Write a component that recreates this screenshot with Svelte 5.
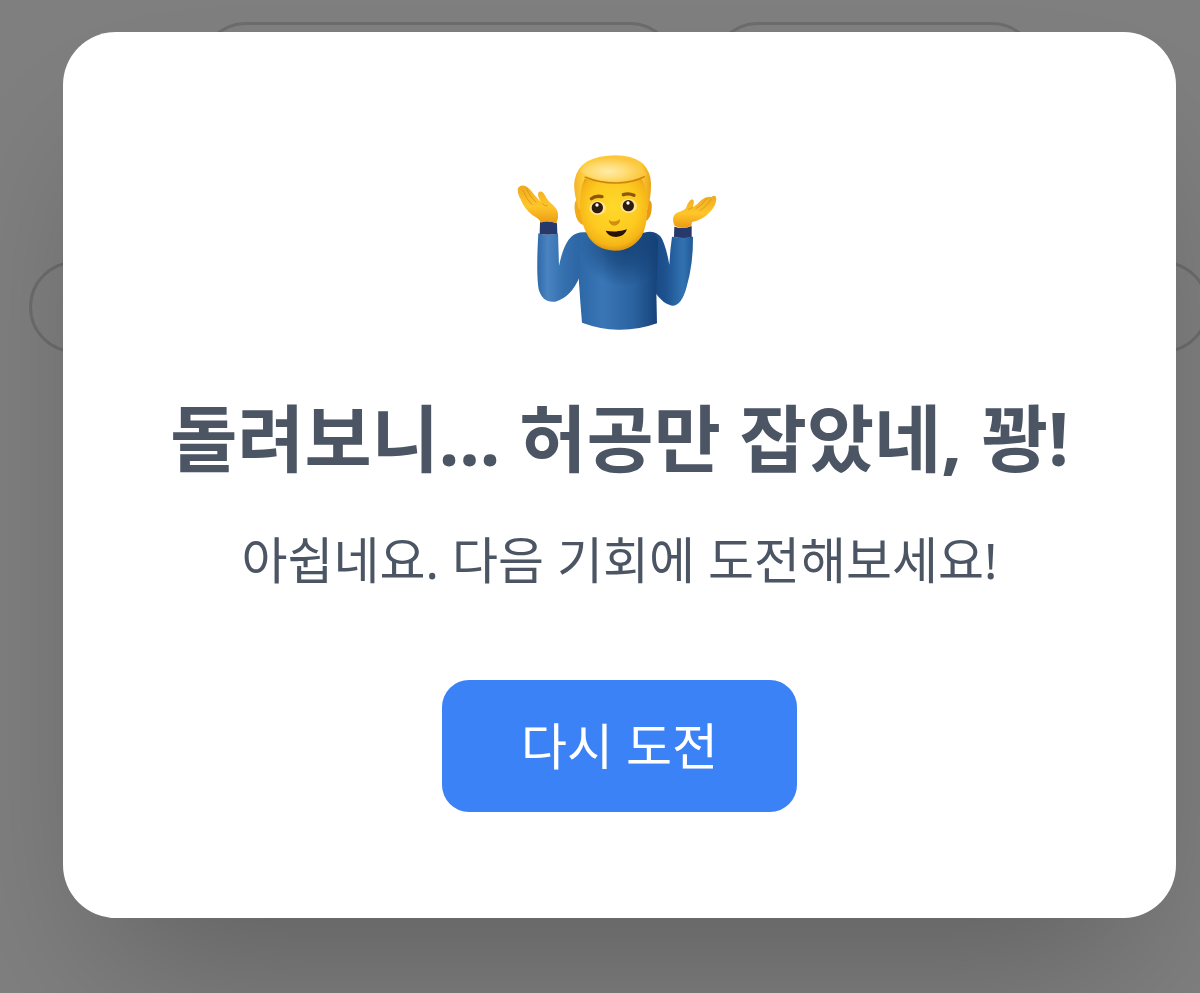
<script>
	let open = true;

	function retry() {
		open = false;
	}
</script>

<div class="page" aria-hidden="true">
	<div class="row">
		<span class="pill wide"></span>
		<span class="pill"></span>
	</div>
	<div class="row full">
		<span class="pill"></span>
		<span class="pill"></span>
	</div>
</div>

{#if open}
	<div class="overlay">
		<div class="dialog" role="dialog" aria-modal="true" aria-labelledby="title">
			<svg class="shrug" viewBox="0 0 720 600" aria-hidden="true">
				<defs>
					<linearGradient id="hair" x1="0" y1="0" x2="1" y2="0">
						<stop offset="0" stop-color="#f3b326" />
						<stop offset="0.12" stop-color="#ffce3c" />
						<stop offset="0.88" stop-color="#fdc832" />
						<stop offset="1" stop-color="#e9a41a" />
					</linearGradient>
					<radialGradient id="face" cx="0.5" cy="0.4" r="0.62">
						<stop offset="0" stop-color="#ffd92a" />
						<stop offset="0.6" stop-color="#fdca20" />
						<stop offset="0.85" stop-color="#f5b518" />
						<stop offset="1" stop-color="#d98c0c" />
					</radialGradient>
					<radialGradient id="fringe" cx="0.42" cy="0.6" r="0.55">
						<stop offset="0" stop-color="#ffecaa" />
						<stop offset="0.5" stop-color="#ffdc74" />
						<stop offset="1" stop-color="#fbc63a" />
					</radialGradient>
					<linearGradient id="hand" x1="0" y1="0" x2="0" y2="1">
						<stop offset="0" stop-color="#eeaa20" />
						<stop offset="0.55" stop-color="#ffc62a" />
						<stop offset="1" stop-color="#e99a14" />
					</linearGradient>
					<linearGradient id="body" x1="0" y1="0" x2="1" y2="0">
						<stop offset="0" stop-color="#2c67a6" />
						<stop offset="0.3" stop-color="#3a76b6" />
						<stop offset="0.7" stop-color="#2a629f" />
						<stop offset="1" stop-color="#154278" />
					</linearGradient>
					<radialGradient id="shade" gradientUnits="userSpaceOnUse" cx="370" cy="310" r="130">
						<stop offset="0" stop-color="#0f3a6c" stop-opacity="0.8" />
						<stop offset="0.5" stop-color="#0f3a6c" stop-opacity="0.5" />
						<stop offset="1" stop-color="#0f3a6c" stop-opacity="0" />
					</radialGradient>
					<linearGradient id="sleeveL" x1="0" y1="0" x2="1" y2="0">
						<stop offset="0" stop-color="#2f69a8" />
						<stop offset="0.2" stop-color="#4a83c0" />
						<stop offset="0.5" stop-color="#3570af" />
						<stop offset="1" stop-color="#28609f" />
					</linearGradient>
					<linearGradient id="sleeveR" x1="0" y1="0" x2="1" y2="0">
						<stop offset="0" stop-color="#154278" />
						<stop offset="0.45" stop-color="#1d5290" />
						<stop offset="0.8" stop-color="#3272b2" />
						<stop offset="1" stop-color="#215993" />
					</linearGradient>
				</defs>
				<path fill="url(#sleeveL)" d="M115 280Q144 290 174 280L177 378Q190 312 214 290Q232 272 266 278L240 408Q214 472 166 485Q128 490 116 448Q108 400 115 280Z" />
				<path fill="url(#sleeveR)" d="M430 280Q466 266 486 296Q500 326 508 374Q510 330 516 290Q548 296 579 290Q580 370 560 440Q545 498 516 497Q490 493 464 456Z" />
				<path fill="url(#body)" d="M240 284Q250 276 262 278L440 278Q466 276 474 300L472 380L469 456L471 550Q360 590 246 548Q240 480 236 412Q234 340 240 284Z" />
				<path fill="url(#shade)" d="M240 284Q250 276 262 278L440 278Q466 276 474 300L472 380L469 456L236 456Q234 340 240 284Z" />
				<path fill="#26396a" d="M120 246Q146 240 171 250L172 281Q147 287 119 282Z" />
				<path fill="#26396a" d="M523 260Q550 268 575 258L575 292Q548 297 522 291Z" />
				<path fill="url(#hand)" d="M122 248Q120 238 98 226Q72 206 62 178Q50 158 54 144Q62 134 76 138Q88 144 104 166L122 186Q108 160 118 155Q128 152 136 168Q142 182 160 196Q184 218 169 250Q146 240 122 248Z" />
				<path fill="none" stroke="#e09a18" stroke-width="3" stroke-linecap="round" d="M68 150Q80 180 96 194M80 146Q90 172 108 186M128 192Q134 198 142 198" />
				<path fill="url(#hand)" d="M524 258Q510 226 536 216Q552 212 558 204Q566 182 576 178Q586 180 578 202Q590 196 604 180Q620 168 634 171Q648 162 649 176Q648 196 632 214Q610 240 576 246L574 258Q548 268 524 258Z" />
				<path fill="none" stroke="#e09a18" stroke-width="3" stroke-linecap="round" d="M620 176Q606 196 588 206M634 178Q620 200 600 212M566 208Q572 206 578 202" />
				<path fill="#f0aa1a" d="M232 176Q220 186 225 216Q230 250 252 256L252 180Z" />
				<path fill="#e79b14" d="M446 180Q458 182 455 208Q452 238 436 244Z" />
				<path fill="url(#hair)" d="M236 208Q218 150 224 120Q230 84 262 64Q296 46 345 46Q400 46 430 72Q452 96 453 130Q454 170 442 208Z" />
				<path fill="url(#face)" d="M240 206Q238 150 254 116Q350 140 424 116Q444 150 441 206Q442 260 424 290Q394 332 344 332Q292 330 266 292Q242 250 240 206Z" />
				<path fill="none" stroke="#c9850f" stroke-width="5" stroke-linecap="round" d="M256 112Q300 130 352 129Q404 126 432 110" />
				<path fill="url(#fringe)" d="M240 94Q270 50 345 48Q418 50 440 104Q400 122 346 125Q280 126 240 94Z" />
				<g fill="none" stroke="#8f560f" stroke-width="10" stroke-linecap="round">
					<path d="M274 176Q286 166 306 170" />
					<path d="M370 164Q386 158 402 166" />
				</g>
				<ellipse cx="293" cy="204" rx="25" ry="21" fill="#ffe28a" />
				<ellipse cx="386" cy="198" rx="25" ry="21" fill="#ffe28a" />
				<circle cx="292" cy="203" r="17" fill="#2f1c10" />
				<circle cx="385" cy="197" r="17" fill="#2f1c10" />
				<circle cx="291" cy="195" r="5" fill="#fff" />
				<circle cx="384" cy="189" r="5" fill="#fff" />
				<path fill="#d28c10" d="M326 240Q342 250 360 238Q362 252 344 257Q328 256 326 240Z" />
				<path fill="#2b1206" d="M317 272Q350 278 381 268Q374 290 348 291Q324 290 317 272Z" />
			</svg>
			<h2 id="title">돌려보니... 허공만 잡았네, 꽝!</h2>
			<p>아쉽네요. 다음 기회에 도전해보세요!</p>
			<button type="button" on:click={retry}>다시 도전</button>
		</div>
	</div>
{/if}

<style>
	:global(body) {
		overflow: hidden;
		background: #fff;
		font-family: "Noto Sans", "Noto Sans CJK KR", sans-serif;
	}

	.page {
		display: flex;
		flex-direction: column;
		gap: 147px;
		margin-right: -9px;
		padding: 22px 0 0 29px;
	}

	.row {
		display: flex;
		justify-content: center;
		gap: 36px;
	}

	.pill {
		box-sizing: border-box;
		width: 326px;
		height: 92px;
		border: 3px solid #d9d9d9;
		border-radius: 46px;
	}

	.pill.wide {
		width: 476px;
	}

	.full .pill {
		flex: 1;
	}

	.overlay {
		position: fixed;
		inset: 0;
		box-sizing: border-box;
		padding: 32px 24px 32px 63px;
		background: rgba(0, 0, 0, 0.5);
	}

	.dialog {
		display: flex;
		flex-direction: column;
		align-items: center;
		box-sizing: border-box;
		padding: 108px 80px 106px;
		border-radius: 53px;
		background: #fff;
		box-shadow: 0 83px 166px -40px rgba(0, 0, 0, 0.25);
		color: #4b5563;
		text-align: center;
	}

	.shrug {
		width: 240px;
		height: 200px;
	}

	h2 {
		margin: 42px 0 0;
		font-size: 73px;
		font-weight: 700;
		line-height: 112px;
	}

	p {
		margin: 26px 0 0;
		font-size: 50px;
		line-height: 80px;
	}

	button {
		margin: 80px 0 0;
		padding: 26px 79px;
		border: none;
		border-radius: 27px;
		background: #3b82f6;
		font-family: inherit;
		font-size: 50px;
		line-height: 80px;
		color: #fff;
		cursor: pointer;
	}
</style>
